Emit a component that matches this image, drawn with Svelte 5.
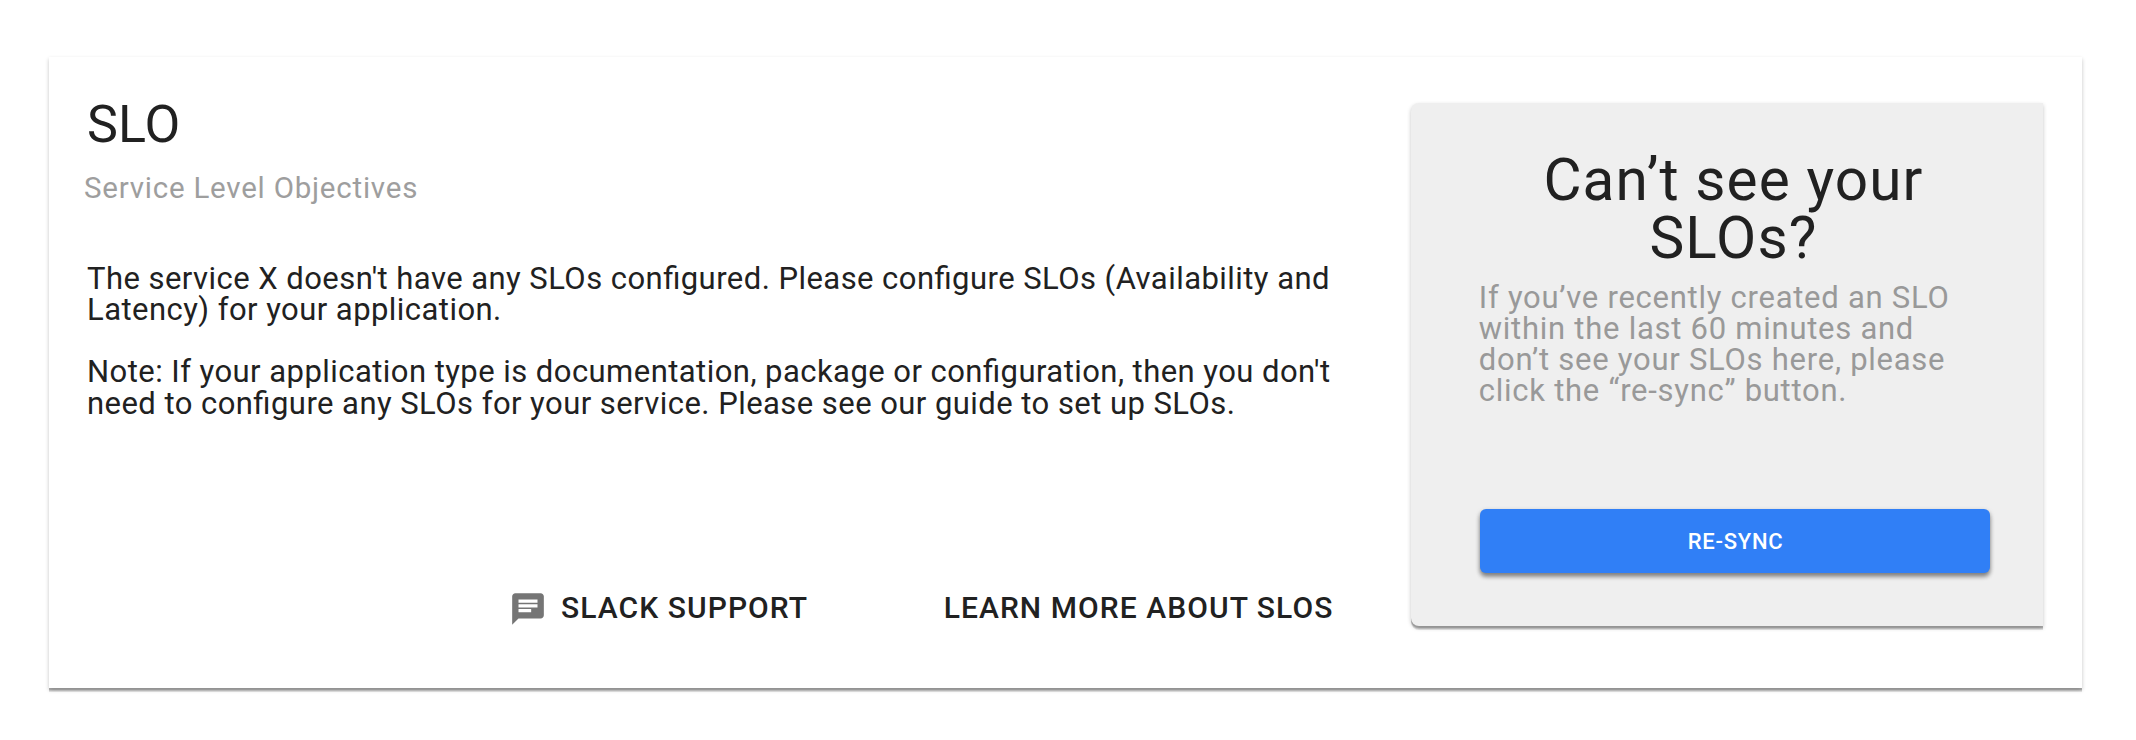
<script>
  const body = [
    ["The service X doesn't have any SLOs configured. Please configure SLOs (Availability and", 'Latency) for your application.'],
    ["Note: If your application type is documentation, package or configuration, then you don't", 'need to configure any SLOs for your service. Please see our guide to set up SLOs.']
  ];
  const hint = ['If you’ve recently created an SLO', 'within the last 60 minutes and', 'don’t see your SLOs here, please', 'click the “re-sync” button.'];
</script>

<div class="page">
  <main class="card">
    <section class="info">
      <h1>SLO</h1>
      <p class="subtitle">Service Level Objectives</p>
      <div class="body">
        {#each body as lines}
          <p>{#each lines as line}<span class="line">{line}</span>{/each}</p>
        {/each}
      </div>
      <div class="actions">
        <button class="link">
          <svg viewBox="0 0 24 24" width="38" height="38" aria-hidden="true">
            <path fill="#757575" d="M20 2H4c-1.1 0-1.99.9-1.99 2L2 22l4-4h14c1.1 0 2-.9 2-2V4c0-1.1-.9-2-2-2zM6 9h12v2H6V9zm8 5H6v-2h8v2zm4-6H6V6h12v2z" />
          </svg>
          SLACK SUPPORT
        </button>
        <button class="link">LEARN MORE ABOUT SLOS</button>
      </div>
    </section>

    <aside class="panel">
      <h2>Can’t see your<br />SLOs?</h2>
      <p class="hint">{#each hint as line}<span class="line">{line}</span>{/each}</p>
      <button class="sync">RE-SYNC</button>
    </aside>
  </main>
</div>

<style>
  :global(body) {
    margin: 0;
    background: #fff;
    font-family: Roboto, sans-serif;
    font-feature-settings: 'liga' 1;
  }
  .page {
    box-sizing: border-box;
    height: 740px;
    padding: 57px 0 0 49px;
  }
  .card {
    box-sizing: border-box;
    display: flex;
    align-items: flex-start;
    justify-content: space-between;
    width: 2033px;
    height: 631px;
    padding: 42px 39px 0 38px;
    background: #fff;
    color: #212121;
  }
  .card, .panel {
    box-shadow:
      0 2px 0 rgba(0, 0, 0, 0.12),
      0 3px 0 rgba(0, 0, 0, 0.1),
      0 4px 0 rgba(0, 0, 0, 0.1),
      0 2px 4px rgba(0, 0, 0, 0.23);
  }
  h1, h2, p {
    margin: 0;
    font-weight: 400;
  }
  .line {
    display: block;
    white-space: nowrap;
  }
  h1 {
    font-size: 52px;
    line-height: 52px;
    letter-spacing: 0.1px;
  }
  .subtitle {
    margin: 21.6px 0 0 -3px;
    font-size: 29.5px;
    line-height: 30px;
    letter-spacing: 0.77px;
    color: #9e9e9e;
  }
  .body {
    display: flex;
    flex-direction: column;
    gap: 31.2px;
    margin-top: 60.2px;
    font-size: 31px;
    line-height: 31.2px;
    letter-spacing: 0.452px;
  }
  .actions {
    display: flex;
    gap: 135.5px;
    margin: 170px 0 0 422px;
  }
  button {
    padding: 0;
    border: 0;
    background: none;
    font-family: inherit;
    font-weight: 500;
  }
  .link {
    display: flex;
    align-items: center;
    gap: 14px;
    height: 38px;
    color: #212121;
    font-size: 30px;
    letter-spacing: 1.07px;
    white-space: nowrap;
  }
  .link svg {
    margin-top: 3px;
  }
  .panel {
    box-sizing: border-box;
    display: flex;
    flex-direction: column;
    width: 632px;
    height: 523px;
    margin-top: 4px;
    padding: 47.5px 53px 0 69px;
    border-radius: 8px 0 0 8px;
    background: #efefef;
  }
  h2 {
    margin-left: -3px;
    font-size: 58.5px;
    line-height: 58px;
    letter-spacing: 1.1px;
    text-align: center;
  }
  .hint {
    margin: 15px 0 0 -1.2px;
    font-size: 31px;
    line-height: 31.2px;
    letter-spacing: 0.737px;
    color: #999;
  }
  .sync {
    height: 64px;
    margin-top: 102.7px;
    padding: 1px 0 0 1px;
    border-radius: 6px;
    background: #307ff6;
    color: #fff;
    font-size: 22px;
    letter-spacing: 0.75px;
    box-shadow:
      0 4px 4px rgba(0, 0, 0, 0.32),
      0 2px 5px rgba(0, 0, 0, 0.26);
  }
</style>
